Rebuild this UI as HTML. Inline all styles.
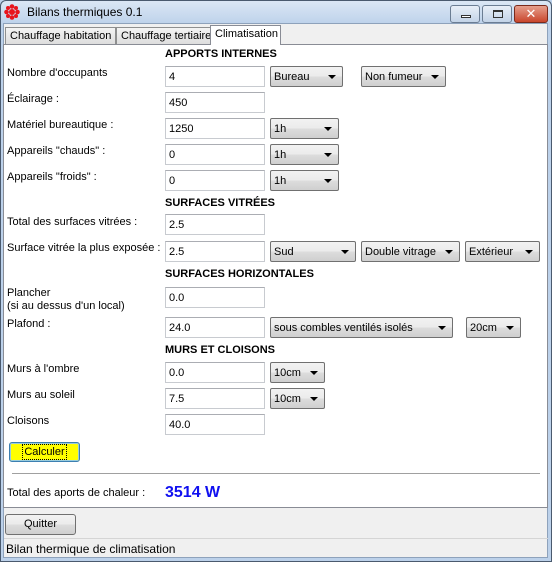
<!DOCTYPE html>
<html><head><meta charset="utf-8"><style>
*{box-sizing:border-box;margin:0;padding:0}
body{width:552px;height:562px;position:relative;overflow:hidden;font-family:"Liberation Sans","DejaVu Sans",sans-serif;font-size:11px;color:#000;background:#bcd1ea}
.abs{position:absolute}
#win{position:absolute;left:0;top:0;width:552px;height:562px;border:1px solid #4a5a6e;border-radius:6px 6px 0 0;background:linear-gradient(#dbe7f5,#bcd1ea 24px)}
#client{position:absolute;left:3px;top:23px;width:545px;height:535px;background:#f0f0f0;border:1px solid #8ea2bb}
.title{left:27px;top:5px;font-size:12px}
.btn{position:absolute;top:5px;height:18px;border:1px solid #6b7d93;border-radius:3px;background:linear-gradient(#e8eff8,#c3d3e7)}
.tab{position:absolute;top:27px;height:18px;border:1px solid #8e8f8f;border-bottom:none;background:linear-gradient(#f4f4f4,#dcdcdc);font-size:11px;padding:2px 4px;white-space:nowrap;overflow:hidden}
#panel{position:absolute;left:3px;top:44px;width:545px;height:464px;background:#fff;border:1px solid #898c95}
.h{position:absolute;left:165px;font-weight:bold;font-size:11px}
.l{position:absolute;left:7px;font-size:11px}
.in{position:absolute;left:165px;width:100px;height:21px;border:1px solid #c8cbd0;border-top-color:#abadb3;background:#fff;padding:4px 3px;font-size:11px}
.sel{position:absolute;height:21px;border:1px solid #707070;border-radius:2px;background:linear-gradient(#f2f2f2,#ebebeb 50%,#dddddd 50%,#cfcfcf);padding:4px 3px;font-size:11px;white-space:nowrap}
.sel:after{content:"";position:absolute;right:6px;top:8px;border-left:4px solid transparent;border-right:4px solid transparent;border-top:4px solid #000}
</style></head><body>
<div id="win"></div>
<svg class="abs" style="left:4px;top:4px" width="16" height="16" viewBox="0 0 16 16"><g fill="#e8141c"><circle cx="8" cy="8" r="3"/><circle cx="8" cy="2.5" r="2.3"/><circle cx="8" cy="13.5" r="2.3"/><circle cx="2.5" cy="8" r="2.3"/><circle cx="13.5" cy="8" r="2.3"/><circle cx="4" cy="4" r="2"/><circle cx="12" cy="4" r="2"/><circle cx="4" cy="12" r="2"/><circle cx="12" cy="12" r="2"/></g></svg>
<div class="abs title">Bilans thermiques 0.1</div>
<div class="btn" style="left:450px;width:30px"><div class="abs" style="left:10px;top:9px;width:10px;height:3px;border:1px solid #333;background:#fff"></div></div>
<div class="btn" style="left:482px;width:30px"><div class="abs" style="left:10px;top:4px;width:10px;height:8px;border:1px solid #333;border-top-width:2px"></div></div>
<div class="btn" style="left:514px;width:34px;background:linear-gradient(#e6a08e,#c9462c);border-color:#7a2a1c;color:#fff;font-weight:bold;font-size:13px;text-align:center;line-height:16px">✕</div>
<div id="client"></div>
<div class="tab" style="left:5px;width:111px">Chauffage habitation</div>
<div class="tab" style="left:116px;width:95px">Chauffage tertiaire</div>
<div id="panel"></div>
<div class="tab" style="left:210px;top:25px;height:20px;width:71px;background:#fff;border-color:#898c95;z-index:2">Climatisation</div>

<div class="h" style="top:48px">APPORTS INTERNES</div>
<div class="l" style="top:67px">Nombre d'occupants</div>
<div class="in" style="top:66px">4</div>
<div class="sel" style="left:270px;top:66px;width:73px">Bureau</div>
<div class="sel" style="left:361px;top:66px;width:85px">Non fumeur</div>
<div class="l" style="top:93px">Éclairage :</div>
<div class="in" style="top:92px">450</div>
<div class="l" style="top:119px">Matériel bureautique :</div>
<div class="in" style="top:118px">1250</div>
<div class="sel" style="left:270px;top:118px;width:69px">1h</div>
<div class="l" style="top:145px">Appareils "chauds" :</div>
<div class="in" style="top:144px">0</div>
<div class="sel" style="left:270px;top:144px;width:69px">1h</div>
<div class="l" style="top:171px">Appareils "froids" :</div>
<div class="in" style="top:170px">0</div>
<div class="sel" style="left:270px;top:170px;width:69px">1h</div>

<div class="h" style="top:197px">SURFACES VITRÉES</div>
<div class="l" style="top:216px">Total des surfaces vitrées :</div>
<div class="in" style="top:214px">2.5</div>
<div class="l" style="top:242px">Surface vitrée la plus exposée :</div>
<div class="in" style="top:241px">2.5</div>
<div class="sel" style="left:270px;top:241px;width:86px">Sud</div>
<div class="sel" style="left:361px;top:241px;width:99px">Double vitrage</div>
<div class="sel" style="left:465px;top:241px;width:75px">Extérieur</div>

<div class="h" style="top:268px">SURFACES HORIZONTALES</div>
<div class="l" style="top:287px;line-height:13px">Plancher<br>(si au dessus d'un local)</div>
<div class="in" style="top:287px">0.0</div>
<div class="l" style="top:318px">Plafond :</div>
<div class="in" style="top:317px">24.0</div>
<div class="sel" style="left:270px;top:317px;width:183px">sous combles ventilés isolés</div>
<div class="sel" style="left:466px;top:317px;width:55px">20cm</div>

<div class="h" style="top:344px">MURS ET CLOISONS</div>
<div class="l" style="top:363px">Murs à l'ombre</div>
<div class="in" style="top:362px">0.0</div>
<div class="sel" style="left:270px;top:362px;width:55px">10cm</div>
<div class="l" style="top:389px">Murs au soleil</div>
<div class="in" style="top:388px">7.5</div>
<div class="sel" style="left:270px;top:388px;width:55px">10cm</div>
<div class="l" style="top:415px">Cloisons</div>
<div class="in" style="top:414px">40.0</div>

<div class="abs" style="left:9px;top:442px;width:71px;height:20px;border:1px solid #3c7fb1;border-radius:3px;background:#ffff00;box-shadow:inset 0 0 0 1px #9cd;text-align:center;line-height:18px;font-size:11px"><span style="outline:1px dotted #000;outline-offset:1px">Calculer</span></div>
<div class="abs" style="left:12px;top:473px;width:528px;height:1px;background:#a0a0a0"></div>
<div class="l" style="top:487px">Total des aports de chaleur :</div>
<div class="abs" style="left:165px;top:484px;color:#1010f0;font-weight:bold;font-size:16px">3514 W</div>

<div class="abs" style="left:5px;top:514px;width:71px;height:21px;border:1px solid #707070;border-radius:3px;background:linear-gradient(#f2f2f2,#ebebeb 50%,#dddddd 50%,#cfcfcf);text-align:center;line-height:19px">Quitter</div>
<div class="abs" style="left:4px;top:538px;width:544px;height:1px;background:#d5d5d5"></div>
<div class="abs" style="left:6px;top:542px;font-size:12px">Bilan thermique de climatisation</div>
</body></html>
